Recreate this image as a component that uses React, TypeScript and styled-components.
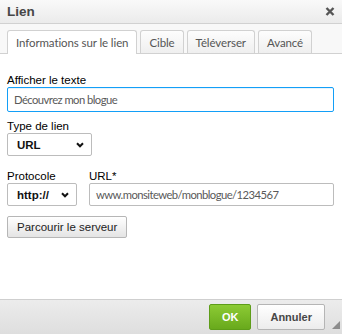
import React from 'react'
import styled, { createGlobalStyle } from 'styled-components'

const GlobalStyle = createGlobalStyle`
  body {
    margin: 0;
    font-family: "Liberation Sans", Arial, sans-serif;
    background: #fff;
  }
`

const Dialog = styled.div`
  width: 342px;
  height: 334px;
  display: flex;
  flex-direction: column;
  background: #fff;
  overflow: hidden;
`

const TitleBar = styled.div`
  height: 23px;
  padding: 0 7px;
  display: flex;
  align-items: center;
  justify-content: space-between;
  background: linear-gradient(#f9f9f9, #ebebeb);
  border-bottom: 1px solid #d1d1d1;
`

const Title = styled.span`
  font-size: 13.5px;
  font-weight: bold;
  color: #474747;
`

const TabStrip = styled.div`
  height: 29px;
  padding: 0 7px;
  display: flex;
  align-items: flex-end;
  gap: 3px;
  background: #f8f8f8;
  border-bottom: 1px solid #d1d1d1;
`

const Tab = styled.div<{ $active?: boolean }>`
  padding: 0 8px;
  display: flex;
  align-items: center;
  white-space: nowrap;
  font-family: Lato, "Liberation Sans", sans-serif;
  font-size: 11.5px;
  letter-spacing: -0.1px;
  color: #555;
  border: 1px solid #d1d1d1;
  border-bottom: none;
  border-radius: 3px 3px 0 0;
  background: ${(p) => (p.$active ? '#fff' : 'linear-gradient(#fdfdfd, #efefef)')};
  margin-bottom: ${(p) => (p.$active ? '-1px' : '0')};
  height: ${(p) => (p.$active ? '23px' : '22px')};
`

const Body = styled.div`
  flex: 1;
  padding: 20px 8px 0 7px;
  display: flex;
  flex-direction: column;
`

const Field = styled.div<{ $gap?: number }>`
  display: flex;
  flex-direction: column;
  margin-top: ${(p) => p.$gap ?? 0}px;
`

const Label = styled.label`
  font-size: 11.5px;
  line-height: 13px;
  color: #000;
`

const TextInput = styled.div<{ $focused?: boolean; $h: number }>`
  height: ${(p) => p.$h}px;
  box-sizing: border-box;
  padding: 0 6px;
  display: flex;
  align-items: center;
  border: 1px solid ${(p) => (p.$focused ? '#139ff7' : '#bcbcbc')};
  border-radius: 2px;
  box-shadow: ${(p) => (p.$focused ? 'inset 0 1px 0 #e6f3fd' : 'none')};
  font-family: Lato, "Liberation Sans", sans-serif;
  font-size: 11.25px;
  letter-spacing: -0.55px;
  color: #595959;
  white-space: nowrap;
`

const Select = styled.div<{ $w: number }>`
  width: ${(p) => p.$w}px;
  height: 23px;
  box-sizing: border-box;
  padding: 0 7px 0 9px;
  display: flex;
  align-items: center;
  justify-content: space-between;
  border: 1px solid #bcbcbc;
  border-radius: 2px;
  background: #fff;
  font-size: 11.5px;
  font-weight: bold;
  color: #111;
`

const Row = styled.div`
  display: flex;
  gap: 12px;
  margin-top: 14px;
`

const Grow = styled(Field)`
  flex: 1;
`

const Button = styled.button`
  align-self: flex-start;
  margin-top: 10px;
  height: 22px;
  padding: 0 9px;
  border: 1px solid #b6b6b6;
  border-radius: 2px;
  background: linear-gradient(#fff, #e4e4e4);
  font-family: "Liberation Sans", Arial, sans-serif;
  font-size: 11.5px;
  color: #222;
`

const Footer = styled.div`
  height: 34px;
  display: flex;
  align-items: center;
  justify-content: flex-end;
  padding-right: 2px;
  background: linear-gradient(#ececec, #dedede);
  border-top: 1px solid #cfcfcf;
`

const FooterButton = styled.button<{ $primary?: boolean }>`
  height: 26px;
  margin-left: 6px;
  padding: 0 12px;
  border-radius: 2px;
  border: 1px solid ${(p) => (p.$primary ? '#5e9d19' : '#b5b5b5')};
  background: ${(p) =>
    p.$primary ? 'linear-gradient(#8ccb34, #68a91c)' : 'linear-gradient(#fff, #ececec)'};
  color: ${(p) => (p.$primary ? '#fff' : '#474747')};
  font-family: "Liberation Sans", Arial, sans-serif;
  font-size: 11px;
  font-weight: bold;
  min-width: ${(p) => (p.$primary ? 40 : 66)}px;
`

const Grip = styled.svg`
  align-self: flex-end;
  margin: 0 0 5px 7px;
`

const Chevron = () => (
  <svg width="8" height="6" viewBox="0 0 8 6">
    <path d="M1 1.2 L4 4.3 L7 1.2" fill="none" stroke="#111" strokeWidth="2" />
  </svg>
)

const tabs = ['Informations sur le lien', 'Cible', 'Téléverser', 'Avancé']

const App = () => (
  <Dialog>
    <GlobalStyle />
    <TitleBar>
      <Title>Lien</Title>
      <svg width="10" height="9" viewBox="0 0 10 9">
        <path d="M1.5 1 L8.5 8 M8.5 1 L1.5 8" stroke="#555" strokeWidth="2.4" />
      </svg>
    </TitleBar>
    <TabStrip>
      {tabs.map((t, i) => (
        <Tab key={t} $active={i === 0}>
          {t}
        </Tab>
      ))}
    </TabStrip>
    <Body>
      <Field>
        <Label>Afficher le texte</Label>
        <TextInput $focused $h={25}>Découvrez mon blogue</TextInput>
      </Field>
      <Field $gap={8}>
        <Label>Type de lien</Label>
        <Select $w={85}>
          URL
          <Chevron />
        </Select>
      </Field>
      <Row>
        <Field>
          <Label>Protocole</Label>
          <Select $w={70}>
            http://
            <Chevron />
          </Select>
        </Field>
        <Grow>
          <Label>URL*</Label>
          <TextInput $h={23}>www.monsiteweb/monblogue/1234567</TextInput>
        </Grow>
      </Row>
      <Button>Parcourir le serveur</Button>
    </Body>
    <Footer>
      <FooterButton $primary>OK</FooterButton>
      <FooterButton>Annuler</FooterButton>
      <Grip width="8" height="8" viewBox="0 0 8 8">
        <path d="M8 0 L8 8 L0 8 Z" fill="#8c8c8c" />
      </Grip>
    </Footer>
  </Dialog>
)

export default App
